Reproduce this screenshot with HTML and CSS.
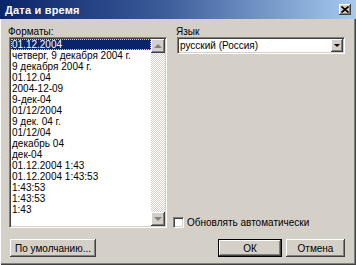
FILE: index.html
```html
<!DOCTYPE html>
<html lang="ru">
<head>
    <meta charset="UTF-8">
    <title>Дата и время</title>
    <link rel="stylesheet" href="styles.css">
</head>
<body>
    <div class="dialog">
        <!-- Title bar -->
        <div class="titlebar">
            <span class="title">Дата и время</span>
            <div class="close">
                <svg width="8" height="7" viewBox="0 0 8 7"><path d="M0.5 0.5 L7.5 6.5 M7.5 0.5 L0.5 6.5" stroke="#000" stroke-width="1.6"/></svg>
            </div>
        </div>

        <div class="body">
            <div class="columns">
                <!-- Formats list (left) -->
                <div class="col-formats">
                    <div class="field-label">Форматы:</div>
                    <div class="listbox">
                        <ul class="items">
                            <li class="selected">01.12.2004</li>
                            <li>четверг, 9 декабря 2004 г.</li>
                            <li>9 декабря 2004 г.</li>
                            <li>01.12.04</li>
                            <li>2004-12-09</li>
                            <li>9-дек-04</li>
                            <li>01/12/2004</li>
                            <li>9 дек. 04 г.</li>
                            <li>01/12/04</li>
                            <li>декабрь 04</li>
                            <li>дек-04</li>
                            <li>01.12.2004 1:43</li>
                            <li>01.12.2004 1:43:53</li>
                            <li>1:43:53</li>
                            <li>1:43:53</li>
                            <li>1:43</li>
                        </ul>
                        <div class="scrollbar">
                            <div class="sb-btn"><span class="arrow-up"></span></div>
                            <div class="sb-track"></div>
                            <div class="sb-btn"><span class="arrow-down"></span></div>
                        </div>
                    </div>
                </div>

                <!-- Language (right) -->
                <div class="col-lang">
                    <div class="field-label">Язык</div>
                    <div class="combo">
                        <span class="combo-text">русский (Россия)</span>
                        <div class="combo-btn"><span class="arrow-black"></span></div>
                    </div>
                    <div class="check">
                        <span class="box"></span>
                        <span>Обновлять автоматически</span>
                    </div>
                </div>
            </div>

            <!-- Bottom buttons -->
            <div class="buttons">
                <div class="btn btn-default-set">По умолчанию...</div>
                <div class="btn-group">
                    <div class="btn btn-ok">ОК</div>
                    <div class="btn btn-cancel">Отмена</div>
                </div>
            </div>
        </div>
    </div>
</body>
</html>
```

FILE: styles.css
```css
html, body {
    margin: 0;
    padding: 0;
    overflow: hidden;
}

body {
    font-family: "Liberation Sans", Arial, sans-serif;
    font-size: 10px;
    color: #000000;
    background-color: #d4d0c8;
}

.dialog {
    width: 356px;
    height: 265px;
    box-sizing: border-box;
    background-color: #d4d0c8;
    box-shadow: inset 1px 0 #ffffff, inset -1px -1px #404040, inset -2px -2px #808080;
    display: flex;
    flex-direction: column;
}

/* Title bar */
.titlebar {
    height: 19px;
    display: flex;
    align-items: center;
    justify-content: space-between;
    padding: 0 5px 0 5px;
    background: linear-gradient(to right, #0a246a 0%, #3a5a98 45%, #a6caf0 100%);
    color: #ffffff;
}

.title {
    font-weight: bold;
    font-size: 11px;
    letter-spacing: 0.2px;
}

.close {
    width: 12px;
    height: 11px;
    margin-top: -1px;
    background-color: #d4d0c8;
    box-shadow: inset -1px -1px #404040, inset 1px 1px #ffffff, inset -2px -2px #808080;
    display: flex;
    align-items: center;
    justify-content: center;
}

/* Content */
.body {
    flex: 1;
    padding: 7px 11px 0 9px;
}

.columns {
    display: flex;
    gap: 10px;
}

.field-label {
    height: 11px;
    line-height: 11px;
    margin-left: -1px;
}

.col-formats {
    width: 158px;
}

.listbox {
    height: 191px;
    box-sizing: border-box;
    background-color: #ffffff;
    border: 1px solid;
    border-color: #808080 #ffffff #ffffff #808080;
    box-shadow: inset 1px 1px #404040, inset -1px -1px #d4d0c8;
    display: flex;
    padding: 1px;
}

.items {
    list-style: none;
    margin: 0;
    padding: 0;
    flex: 1;
}

.items li {
    height: 11px;
    line-height: 11px;
    padding-left: 1px;
    white-space: nowrap;
    overflow: hidden;
}

.items li.selected {
    background-color: #0a246a;
    color: #ffffff;
    outline: 1px dotted #e8d070;
    outline-offset: -1px;
}

.scrollbar {
    width: 14px;
    display: flex;
    flex-direction: column;
}

.sb-btn {
    height: 14px;
    background-color: #d4d0c8;
    box-shadow: inset -1px -1px #404040, inset 1px 1px #ffffff, inset -2px -2px #808080;
    display: flex;
    align-items: center;
    justify-content: center;
}

.sb-track {
    flex: 1;
    background-color: #ffffff;
    background-image: repeating-conic-gradient(#d4d0c8 0 25%, #ffffff 0 50%);
    background-size: 2px 2px;
}

.arrow-up, .arrow-down, .arrow-black {
    width: 0;
    height: 0;
    border-left: 4px solid transparent;
    border-right: 4px solid transparent;
}

.arrow-up {
    border-bottom: 4px solid #808080;
}

.arrow-down {
    border-top: 4px solid #808080;
}

.arrow-black {
    border-left-width: 3px;
    border-right-width: 3px;
    border-top: 3px solid #000000;
}

/* Right column */
.col-lang {
    flex: 1;
    display: flex;
    flex-direction: column;
}

.combo {
    height: 17px;
    box-sizing: border-box;
    background-color: #ffffff;
    border: 1px solid;
    border-color: #808080 #ffffff #ffffff #808080;
    box-shadow: inset 1px 1px #404040, inset -1px -1px #d4d0c8;
    display: flex;
    align-items: center;
    padding: 1px 1px 1px 2px;
}

.combo-text {
    flex: 1;
}

.combo-btn {
    width: 12px;
    height: 13px;
    background-color: #d4d0c8;
    box-shadow: inset -1px -1px #404040, inset 1px 1px #ffffff, inset -2px -2px #808080;
    display: flex;
    align-items: center;
    justify-content: center;
}

.check {
    margin-top: auto;
    display: flex;
    align-items: center;
    gap: 3px;
    height: 11px;
    margin-left: -4px;
}

.check .box {
    width: 11px;
    height: 11px;
    box-sizing: border-box;
    background-color: #ffffff;
    border: 1px solid;
    border-color: #808080 #ffffff #ffffff #808080;
    box-shadow: inset 1px 1px #404040, inset -1px -1px #d4d0c8;
}

/* Buttons row */
.buttons {
    display: flex;
    justify-content: space-between;
    margin-top: 11px;
    padding-left: 1px;
}

.btn-group {
    display: flex;
    gap: 4px;
}

.btn {
    height: 18px;
    box-sizing: border-box;
    background-color: #d4d0c8;
    box-shadow: inset -1px -1px #404040, inset 1px 1px #ffffff, inset -2px -2px #808080;
    display: flex;
    align-items: center;
    justify-content: center;
}

.btn-default-set {
    width: 86px;
}

.btn-ok {
    width: 64px;
    border: 1px solid #000000;
}

.btn-cancel {
    width: 59px;
}
```
